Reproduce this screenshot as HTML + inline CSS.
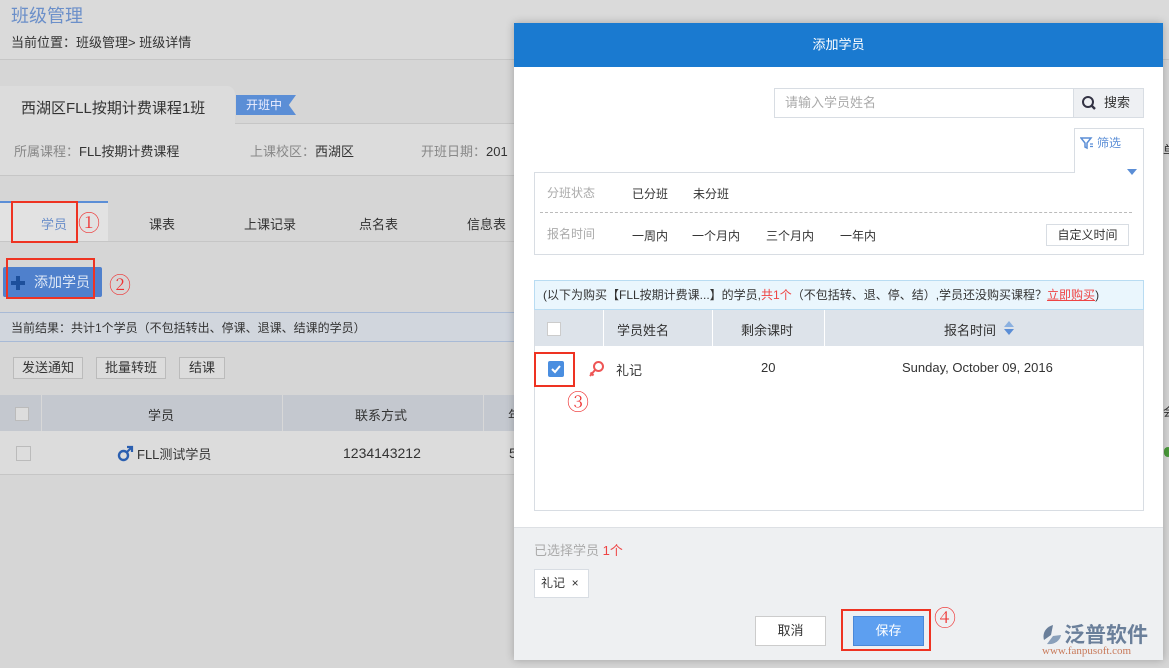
<!DOCTYPE html>
<html><head><meta charset="utf-8"><style>
*{margin:0;padding:0;box-sizing:border-box}
body{width:1169px;height:668px;overflow:hidden;background:#d6d6d6;font-family:"Liberation Sans","Noto Sans CJK SC",sans-serif;font-size:13px;color:#333;position:relative}
.a{position:absolute}
.red{border:2px solid #e32;position:absolute}
.circ{position:absolute;color:#e33;font-size:22px;font-family:"Noto Serif CJK SC",serif;font-weight:300}
.btn{position:absolute;border:1px solid #bbb;background:#dcdcdc;font-size:13px;text-align:center;line-height:20px}
</style></head><body>
<div class="a" style="left:0;top:0;width:1169px;height:60px;background:#dadada;border-bottom:1px solid #c6c6c6"></div>
<div class="a" style="left:11px;top:2px;font-size:18px;color:#6b8fc9">班级管理</div>
<div class="a" style="left:11px;top:32px;font-size:13px;color:#333">当前位置：班级管理&gt; 班级详情</div>
<div class="a" style="left:0;top:86px;width:235px;height:40px;background:#dcdcdc;border-radius:0 8px 0 0"></div>
<div class="a" style="left:235px;top:123px;width:300px;height:1px;background:#c6c6c6"></div>
<div class="a" style="left:21px;top:97px;font-size:15px;color:#333">西湖区FLL按期计费课程1班</div>
<div class="a" style="left:236px;top:95px;width:60px;height:20px;background:#5b8ed6;color:#eef;font-size:12px;line-height:20px;padding-left:10px;clip-path:polygon(0 0,100% 0,88% 50%,100% 100%,0 100%)">开班中</div>
<div class="a" style="left:0;top:124px;width:520px;height:52px;background:#dcdcdc;border-bottom:1px solid #c6c6c6"></div>
<div class="a" style="left:14px;top:141px;color:#888">所属课程：<span style="color:#333">FLL按期计费课程</span></div>
<div class="a" style="left:250px;top:141px;color:#888">上课校区：<span style="color:#333">西湖区</span></div>
<div class="a" style="left:421px;top:141px;color:#888">开班日期：<span style="color:#333">201</span></div>
<div class="a" style="left:0;top:201px;width:108px;height:40px;background:#e2e2e2;border-top:2px solid #5b8ed6"></div>
<div class="a" style="left:0;top:241px;width:520px;height:1px;background:#c6c6c6"></div>
<div class="a" style="left:41px;top:214px;color:#6b8fc9">学员</div>
<div class="a" style="left:149px;top:214px">课表</div>
<div class="a" style="left:244px;top:214px">上课记录</div>
<div class="a" style="left:359px;top:214px">点名表</div>
<div class="a" style="left:467px;top:214px">信息表</div>
<div class="red" style="left:11px;top:201px;width:67px;height:42px"></div>
<div class="circ" style="left:78px;top:207px">①</div>
<div class="a" style="left:3px;top:267px;width:99px;height:30px;background:#4f80cc;border-radius:2px;color:#dfe8f6;font-size:14px;line-height:30px;padding-left:31px">添加学员</div>
<div class="a" style="left:11px;top:281px;width:14px;height:4px;background:#1d4f9b"></div>
<div class="a" style="left:16px;top:276px;width:4px;height:14px;background:#1d4f9b"></div>
<div class="red" style="left:6px;top:258px;width:89px;height:41px"></div>
<div class="circ" style="left:109px;top:269px">②</div>
<div class="a" style="left:0;top:312px;width:520px;height:30px;background:#d1d6dd;border-top:1px solid #a8bad6;border-bottom:1px solid #a8bad6"></div>
<div class="a" style="left:11px;top:319px;font-size:12px">当前结果：共计1个学员（不包括转出、停课、退课、结课的学员）</div>
<div class="btn" style="left:13px;top:357px;width:70px">发送通知</div>
<div class="btn" style="left:96px;top:357px;width:70px">批量转班</div>
<div class="btn" style="left:179px;top:357px;width:46px">结课</div>
<div class="a" style="left:0;top:395px;width:520px;height:36px;background:#c4c8cf"></div>
<div class="a" style="left:41px;top:395px;width:1px;height:36px;background:#d8d8d8"></div>
<div class="a" style="left:282px;top:395px;width:1px;height:36px;background:#d8d8d8"></div>
<div class="a" style="left:483px;top:395px;width:1px;height:36px;background:#d8d8d8"></div>
<div class="a" style="left:15px;top:407px;width:14px;height:14px;background:#ddd;border:1px solid #bbb"></div>
<div class="a" style="left:148px;top:405px">学员</div>
<div class="a" style="left:355px;top:405px">联系方式</div>
<div class="a" style="left:508px;top:405px">年</div>
<div class="a" style="left:0;top:431px;width:520px;height:44px;background:#dcdcdc;border-bottom:1px solid #c6c6c6"></div>
<div class="a" style="left:16px;top:446px;width:15px;height:15px;background:#ddd;border:1px solid #bbb"></div>
<svg class="a" style="left:117px;top:445px" width="17" height="17" viewBox="0 0 17 17"><circle cx="6.5" cy="10.5" r="4.5" fill="none" stroke="#2b5fb0" stroke-width="2.4"/><path d="M10 7L15 2M10 2H15V7" stroke="#2b5fb0" stroke-width="2.2" fill="none"/></svg>
<div class="a" style="left:137px;top:444px">FLL测试学员</div>
<div class="a" style="left:343px;top:445px;font-size:14px">1234143212</div>
<div class="a" style="left:509px;top:445px;font-size:14px">5</div>
<div class="a" style="left:1163px;top:140px;font-size:13px">单</div>
<div class="a" style="left:1163px;top:403px;font-size:12px">会</div>
<div class="a" style="left:1164px;top:447px;width:8px;height:10px;background:#4a9a3a;border-radius:5px"></div>

<div class="a" style="left:514px;top:23px;width:649px;height:637px;background:#fff;box-shadow:0 0 8px rgba(0,0,0,.25)"></div>
<div class="a" style="left:514px;top:23px;width:649px;height:44px;background:#1a7ad0;color:#fff;text-align:center;line-height:44px;font-size:13px">添加学员</div>
<div class="a" style="left:774px;top:88px;width:300px;height:30px;border:1px solid #d8dde3;color:#aaa;padding-left:10px;line-height:28px">请输入学员姓名</div>
<div class="a" style="left:1073px;top:88px;width:71px;height:30px;border:1px solid #d8dde3;background:#eef0f3;line-height:28px;padding-left:30px">搜索</div>
<svg class="a" style="left:1081px;top:95px" width="16" height="16" viewBox="0 0 16 16"><circle cx="7" cy="7" r="5" fill="none" stroke="#334" stroke-width="2"/><path d="M10.5 10.5L14 14" stroke="#334" stroke-width="2.4"/></svg>
<div class="a" style="left:1074px;top:128px;width:70px;height:45px;border:1px solid #d8dde3;border-bottom:none;background:#fff"></div>
<div class="a" style="left:534px;top:172px;width:610px;height:83px;border:1px solid #d8dde3;border-top:none"></div>
<div class="a" style="left:534px;top:172px;width:540px;height:1px;background:#d8dde3"></div>
<svg class="a" style="left:1080px;top:136px" width="14" height="14" viewBox="0 0 14 14"><path d="M1 2H11L7 7V12L5 11V7Z" fill="none" stroke="#5b8ed6" stroke-width="1.5"/><path d="M10 8h3M10 10.5h3" stroke="#5b8ed6" stroke-width="1.2"/></svg>
<div class="a" style="left:1097px;top:134px;color:#5b8ed6;font-size:12px">筛选</div>
<div class="a" style="left:1127px;top:169px;width:0;height:0;border-left:5px solid transparent;border-right:5px solid transparent;border-top:6px solid #5b8ed6"></div>
<div class="a" style="left:547px;top:184px;color:#aaa;font-size:12px">分班状态</div>
<div class="a" style="left:632px;top:185px;font-size:12px">已分班</div>
<div class="a" style="left:693px;top:185px;font-size:12px">未分班</div>
<div class="a" style="left:540px;top:212px;width:592px;border-top:1px dashed #bbb"></div>
<div class="a" style="left:547px;top:225px;color:#aaa;font-size:12px">报名时间</div>
<div class="a" style="left:632px;top:227px;font-size:12px">一周内</div>
<div class="a" style="left:692px;top:227px;font-size:12px">一个月内</div>
<div class="a" style="left:766px;top:227px;font-size:12px">三个月内</div>
<div class="a" style="left:840px;top:227px;font-size:12px">一年内</div>
<div class="a" style="left:1046px;top:224px;width:83px;height:22px;border:1px solid #d8dde3;font-size:12px;text-align:center;line-height:20px">自定义时间</div>

<div class="a" style="left:534px;top:280px;width:610px;height:231px;border:1px solid #d8dde3"></div>
<div class="a" style="left:534px;top:280px;width:610px;height:30px;background:#eaf6fd;border:1px solid #b9dcf2;font-size:12px;line-height:28px;padding-left:8px">(以下为购买【FLL按期计费课...】的学员,<span style="color:#e44">共1个</span>（不包括转、退、停、结）,学员还没购买课程？<span style="color:#e44;text-decoration:underline">立即购买</span>)</div>
<div class="a" style="left:535px;top:310px;width:608px;height:36px;background:#dde3ea"></div>
<div class="a" style="left:603px;top:310px;width:1px;height:36px;background:#fff"></div>
<div class="a" style="left:712px;top:310px;width:1px;height:36px;background:#fff"></div>
<div class="a" style="left:824px;top:310px;width:1px;height:36px;background:#fff"></div>
<div class="a" style="left:547px;top:322px;width:14px;height:14px;background:#fff;border:1px solid #ccc"></div>
<div class="a" style="left:617px;top:320px">学员姓名</div>
<div class="a" style="left:741px;top:320px">剩余课时</div>
<div class="a" style="left:944px;top:320px">报名时间</div>
<svg class="a" style="left:1004px;top:321px" width="10" height="14" viewBox="0 0 10 14"><path d="M5 0L10 6H0Z" fill="#8ab0e0"/><path d="M5 14L10 8H0Z" fill="#5b8ed6"/></svg>
<div class="a" style="left:548px;top:361px;width:16px;height:16px;background:#4a8ee0;border-radius:2px"></div>
<svg class="a" style="left:548px;top:361px" width="16" height="16"><path d="M4 8L7 11L12 5" stroke="#fff" stroke-width="2" fill="none"/></svg>
<div class="red" style="left:534px;top:352px;width:41px;height:35px"></div>
<svg class="a" style="left:589px;top:360px" width="16" height="18" viewBox="0 0 16 18"><circle cx="9.5" cy="6.5" r="4.5" fill="none" stroke="#e55" stroke-width="2"/><path d="M6 10L1 16M1.5 12.5L4.5 15.5" stroke="#e55" stroke-width="2"/></svg>
<div class="a" style="left:616px;top:360px">礼记</div>
<div class="a" style="left:761px;top:360px">20</div>
<div class="a" style="left:902px;top:360px">Sunday, October 09, 2016</div>
<div class="circ" style="left:567px;top:386px">③</div>

<div class="a" style="left:514px;top:527px;width:649px;height:133px;background:#eef0f2;border-top:1px solid #dde0e4"></div>
<div class="a" style="left:534px;top:540px;color:#aaa;font-size:13px">已选择学员 <span style="color:#e44">1个</span></div>
<div class="a" style="left:534px;top:569px;width:55px;height:29px;background:#fff;border:1px solid #d8dde3;font-size:12px;line-height:27px;padding-left:6px">礼记 &nbsp;×</div>
<div class="a" style="left:755px;top:616px;width:71px;height:30px;background:#fff;border:1px solid #ccc;text-align:center;line-height:28px">取消</div>
<div class="a" style="left:853px;top:616px;width:71px;height:30px;background:#5d9ff0;border:1px solid #4a88d8;color:#fff;text-align:center;line-height:28px">保存</div>
<div class="red" style="left:841px;top:609px;width:90px;height:42px"></div>
<div class="circ" style="left:934px;top:602px">④</div>
<svg class="a" style="left:1041px;top:624px" width="24" height="22" viewBox="0 0 24 22"><path d="M12 1C5 3 1 9 3 16L10 11Z" fill="#6a7f9a"/><path d="M6 20C13 21 19 17 20 11L12 12Z" fill="#8aa0ba"/></svg>
<div class="a" style="left:1064px;top:619px;font-size:21px;color:#6a7f9a;font-weight:bold">泛普软件</div>
<div class="a" style="left:1042px;top:645px;font-size:11px;color:#c87a5a;font-family:'Liberation Serif',serif">www.fanpusoft.com</div>
</body></html>
